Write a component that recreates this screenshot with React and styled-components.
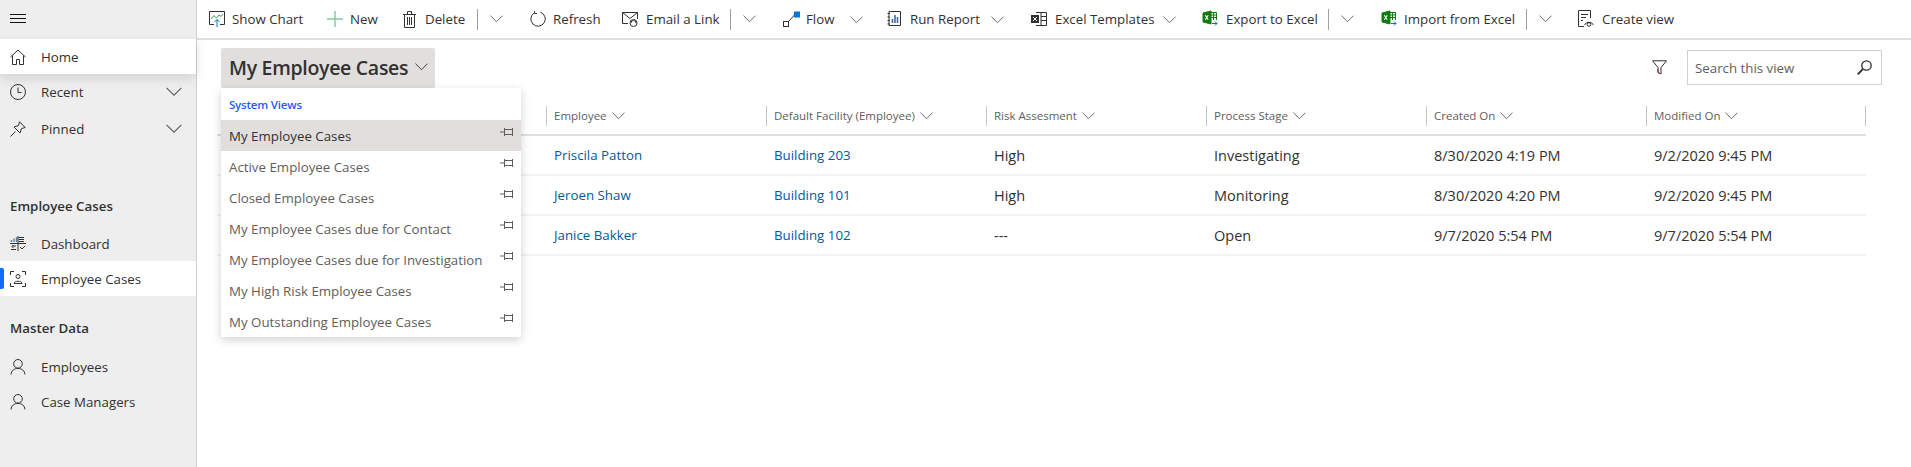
import React from 'react';
import styled, { createGlobalStyle } from 'styled-components';

const GlobalStyle = createGlobalStyle`
    html, body {
        margin: 0;
        padding: 0;
        background: #fff;
        font-family: "Open Sans", "Noto Sans", sans-serif;
        color: #323130;
    }
`;

const Svg = ({ size = 16, w, h, children }) => (
    <svg width={w || size} height={h || size} viewBox={`0 0 ${w || size} ${h || size}`} fill="none" stroke="#323130" strokeWidth="1">
        {children}
    </svg>
);

const Chevron = ({ size = 14, color = '#605e5c' }) => (
    <svg width={size} height={size * 0.6} viewBox="0 0 14 8" fill="none" stroke={color} strokeWidth="1">
        <path d="M0.5 0.5 L7 7 L13.5 0.5" />
    </svg>
);

const ChartIcon = () => (
    <Svg>
        <path d="M5 13.5 H0.5 V0.5 H15.5 V13.5 H11" />
        <path d="M2 8 L5 4.5 L7.5 7 L10 4 L12 5.5 L14 3" stroke="#33a853" />
        <path d="M8 16 V8.5 M5.5 11 L8 8.5 L10.5 11" stroke="#106ebe" />
    </Svg>
);
const PlusIcon = () => (
    <Svg>
        <path d="M8 0 V16 M0 8 H16" stroke="#7fcb9f" strokeWidth="1.4" />
    </Svg>
);
const TrashIcon = () => (
    <Svg w={13} h={17}>
        <path d="M0 3.5 H13 M4.5 3 V0.5 H8.5 V3 M1.5 3.5 V16.5 H11.5 V3.5 M4.5 6 V14 M6.5 6 V14 M8.5 6 V14" />
    </Svg>
);
const RefreshIcon = () => (
    <Svg>
        <path d="M10.5 1.2 A7.2 7.2 0 1 1 4.2 1.9" />
        <path d="M4.5 0 V2.5 H7" />
    </Svg>
);
const MailIcon = () => (
    <Svg>
        <path d="M6 12.5 H0.5 V1.5 H15.5 V8 M0.5 1.5 L8 7.5 L15.5 1.5" />
        <circle cx="11.5" cy="12" r="3.5" />
        <path d="M9 12 A2.5 2.5 0 0 1 14 12" />
    </Svg>
);
const FlowIcon = () => (
    <Svg w={17} h={16}>
        <rect x="0.5" y="10.5" width="5" height="5" />
        <path d="M5.5 10.5 L11.5 4" />
        <rect x="11.5" y="1" width="5" height="5" fill="#0078d4" stroke="#0078d4" />
    </Svg>
);
const ReportIcon = () => (
    <Svg w={14} h={16}>
        <path d="M2 0.5 H13.5 V14.5 H2 V0.5 M0.5 2.5 H3 M0.5 6 H3 M0.5 9.5 H3 M0.5 13 H3" />
        <path d="M5.5 12 V8 M8 12 V4 M10.5 12 V6" stroke="#3b6ea5" strokeWidth="1.6" />
    </Svg>
);
const TemplateIcon = () => (
    <Svg>
        <path d="M5 1.5 H15.5 V14.5 H5 M10 1.5 V14.5 M10 5.5 H15.5 M10 9.5 H15.5" />
        <rect x="0" y="4" width="8" height="8" fill="#323130" stroke="none" />
        <path d="M2 6 L6 10 M6 6 L2 10" stroke="#fff" />
    </Svg>
);
const ExcelIcon = () => (
    <Svg w={16} h={18}>
        <path d="M1 3 L9 1 V14 L1 12 Z" fill="#107c10" stroke="#107c10" />
        <path d="M3.3 5.2 L6.2 9.8 M6.2 5.2 L3.3 9.8" stroke="#fff" strokeWidth="1.1" />
        <path d="M9 2.5 H14.5 V10 M9 5 H14.5 M9 7.5 H14.5 M11.5 2.5 V10" stroke="#107c10" />
        <path d="M10 13.5 H15 M13 11.5 L15 13.5 L13 15.5" stroke="#106ebe" />
    </Svg>
);
const ViewIcon = () => (
    <Svg w={16} h={18}>
        <path d="M6 16.5 H0.5 V0.5 H12.5 V8 M3 4.5 H10 M3 7.5 H8 M3 10.5 H5" />
        <path d="M6.5 15 A5 5 0 0 1 15.5 15" />
        <circle cx="11" cy="14.5" r="1.8" />
    </Svg>
);
const HomeIcon = () => (
    <Svg>
        <path d="M0.5 8 L8 1 L15.5 8 M2.5 6.5 V15.5 H6.5 V10.5 H9.5 V15.5 H13.5 V6.5" />
    </Svg>
);
const ClockIcon = () => (
    <Svg>
        <circle cx="8" cy="8" r="7.5" />
        <path d="M8 3.5 V8.5 H11.5" />
    </Svg>
);
const PinIcon = () => (
    <Svg>
        <path d="M0.5 15.5 L5.5 10.5 M9.5 0.8 L15.2 6.5 L11.5 7.5 L10 12 L4 6 L8.5 4.5 Z" />
    </Svg>
);
const DashIcon = () => (
    <Svg>
        <path d="M1.5 6 V4 M4 6 V2.5 M6.5 6 V1" stroke="#5b7fa6" strokeWidth="1.4" />
        <path d="M0 7.5 H16 M8.5 1.5 H14 M8.5 3.5 H14 M8.5 5.5 H14 M8 0 V15" />
        <path d="M6 10 H2 M3.5 9 L2 10.5 L3.5 12 M1 13.5 H6" />
        <path d="M10 11 L12 13 L15 10" />
    </Svg>
);
const CaseIcon = () => (
    <Svg>
        <path d="M0.5 4 V0.5 H4 M12 0.5 H15.5 V4 M15.5 12 V15.5 H12 M4 15.5 H0.5 V12" />
        <circle cx="8" cy="5.5" r="2" />
        <path d="M4 12.5 C4 9.5 12 9.5 12 12.5 Z" />
    </Svg>
);
const PersonIcon = () => (
    <Svg>
        <circle cx="8" cy="4.8" r="4.3" />
        <path d="M1 15.5 C1.5 11.5 4 9.5 8 9.5 C12 9.5 14.5 11.5 15 15.5" />
    </Svg>
);
const FilterIcon = () => (
    <Svg w={15} h={15}>
        <path d="M0.5 0.8 H14.5 L9 7.5 V14 L6 12.5 V7.5 Z" />
        <path d="M6 9 V12.5 L7.5 13.2" stroke="#a4262c" />
    </Svg>
);
const SearchIcon = () => (
    <Svg w={15} h={15}>
        <circle cx="9.5" cy="5.5" r="4.7" strokeWidth="1.3" />
        <path d="M6 9 L0.7 14.3" strokeWidth="1.8" />
    </Svg>
);
const PinSmall = () => (
    <svg width="14" height="8" viewBox="0 0 14 8" fill="none" stroke="#605e5c" strokeWidth="1">
        <path d="M0 4 H4.5 M4.5 0 V8 M4.5 1.5 H12.5 M4.5 6.5 H12.5 M12.5 0 V8" />
    </svg>
);

const commands = [
    { icon: <ChartIcon />, label: 'Show Chart', w: 118 },
    { icon: <PlusIcon />, label: 'New', w: 76 },
    { icon: <TrashIcon />, label: 'Delete', iconGap: 9, w: 74 },
    { sep: true, w: 53 },
    { icon: <RefreshIcon />, label: 'Refresh', w: 92 },
    { icon: <MailIcon />, label: 'Email a Link', iconGap: 8, w: 108 },
    { sep: true, w: 53 },
    { icon: <FlowIcon />, label: 'Flow', iconGap: 6, w: 104, chevron: 857 - 783 },
    { icon: <ReportIcon />, label: 'Run Report', iconGap: 9, w: 144, chevron: 998 - 887 },
    { icon: <TemplateIcon />, label: 'Excel Templates', iconGap: 8, w: 171, chevron: 1170 - 1031 },
    { icon: <ExcelIcon />, label: 'Export to Excel', iconGap: 8, w: 126 },
    { sep: true, w: 53 },
    { icon: <ExcelIcon />, label: 'Import from Excel', iconGap: 7, w: 145 },
    { sep: true, w: 52 },
    { icon: <ViewIcon />, label: 'Create view', iconGap: 8, w: 110 },
];

const columns = ['Employee', 'Default Facility (Employee)', 'Risk Assesment', 'Process Stage', 'Created On', 'Modified On'];

const rows = [
    ['Priscila Patton', 'Building 203', 'High', 'Investigating', '8/30/2020 4:19 PM', '9/2/2020 9:45 PM'],
    ['Jeroen Shaw', 'Building 101', 'High', 'Monitoring', '8/30/2020 4:20 PM', '9/2/2020 9:45 PM'],
    ['Janice Bakker', 'Building 102', '---', 'Open', '9/7/2020 5:54 PM', '9/7/2020 5:54 PM'],
];

const views = [
    'My Employee Cases',
    'Active Employee Cases',
    'Closed Employee Cases',
    'My Employee Cases due for Contact',
    'My Employee Cases due for Investigation',
    'My High Risk Employee Cases',
    'My Outstanding Employee Cases',
];

const App = () => (
    <>
        <GlobalStyle />
        <Page>
            <Sidebar>
                <Burger>
                    <svg width="16" height="9" viewBox="0 0 16 9" stroke="#111" strokeWidth="1">
                        <path d="M0 0.5 H16 M0 4.5 H16 M0 8.5 H16" />
                    </svg>
                </Burger>
                <NavRow $h={35} $active $shadow><HomeIcon /><NavLabel>Home</NavLabel></NavRow>
                <NavRow $h={36}><ClockIcon /><NavLabel>Recent</NavLabel><NavChevron><Chevron size={16} /></NavChevron></NavRow>
                <NavRow $h={38}><PinIcon /><NavLabel>Pinned</NavLabel><NavChevron><Chevron size={16} /></NavChevron></NavRow>
                <GroupTitle $top={41} $bottom={2}>Employee Cases</GroupTitle>
                <NavRow $h={35}><DashIcon /><NavLabel>Dashboard</NavLabel></NavRow>
                <NavRow $h={35} $active $marker><CaseIcon /><NavLabel>Employee Cases</NavLabel></NavRow>
                <GroupTitle $top={15} $bottom={3}>Master Data</GroupTitle>
                <NavRow $h={35}><PersonIcon /><NavLabel>Employees</NavLabel></NavRow>
                <NavRow $h={35}><PersonIcon /><NavLabel>Case Managers</NavLabel></NavRow>
            </Sidebar>
            <Main>
                <Toolbar>
                    {commands.map((item, i) =>
                        item.sep ? (
                            <SplitChevron key={i} $w={item.w}>
                                <Divider />
                                <Chevron size={13} />
                            </SplitChevron>
                        ) : (
                            <Command key={i} $w={item.w} $gap={item.iconGap || 7}>
                                {item.icon}
                                <span>{item.label}</span>
                                {item.chevron && <CommandChevron $left={item.chevron}><Chevron size={13} /></CommandChevron>}
                            </Command>
                        )
                    )}
                </Toolbar>
                <Content>
                    <ViewBar>
                        <ViewTitle>
                            My Employee Cases
                            <Chevron size={13} color="#323130" />
                        </ViewTitle>
                        <ViewTools>
                            <FilterIcon />
                            <SearchBox>
                                <span>Search this view</span>
                                <SearchIcon />
                            </SearchBox>
                        </ViewTools>
                        <Menu>
                            <MenuHeading>System Views</MenuHeading>
                            {views.map((view, i) => (
                                <MenuItem key={view} $selected={i === 0}>
                                    {view}
                                    <PinHolder><PinSmall /></PinHolder>
                                </MenuItem>
                            ))}
                        </Menu>
                    </ViewBar>
                    <Grid>
                        <HeaderRow>
                            <LeadCell />
                            {columns.map(col => (
                                <HeaderCell key={col}>
                                    <span>{col}</span>
                                    <Chevron size={13} />
                                </HeaderCell>
                            ))}
                            <EndCap />
                        </HeaderRow>
                        {rows.map(row => (
                            <DataRow key={row[0]}>
                                <LeadCell />
                                {row.map((value, i) => (
                                    <DataCell key={i} $link={i < 2}>{value}</DataCell>
                                ))}
                            </DataRow>
                        ))}
                    </Grid>
                </Content>
            </Main>
        </Page>
    </>
);

const Page = styled.div`
    display: flex;
    height: 467px;
    overflow: hidden;
`;
const Sidebar = styled.div`
    width: 196px;
    flex: none;
    background: #eeeeee;
    border-right: 1px solid #d2d0ce;
`;
const Burger = styled.div`
    height: 39px;
    padding: 14px 0 0 10px;
    box-sizing: border-box;
    display: flex;
    align-items: flex-start;
`;
const NavRow = styled.div`
    position: relative;
    height: ${props => props.$h}px;
    display: flex;
    align-items: center;
    padding-left: 10px;
    background: ${props => (props.$active ? '#fff' : 'transparent')};
    box-shadow: ${props => (props.$shadow ? '0 4px 12px rgba(0, 0, 0, 0.12)' : 'none')};
    &::before {
        content: '';
        display: ${props => (props.$marker ? 'block' : 'none')};
        position: absolute;
        left: 0;
        top: 7px;
        width: 4px;
        height: 21px;
        background: #0f6cff;
        border-radius: 0 2px 2px 0;
    }
`;
const NavLabel = styled.span`
    margin-left: 15px;
    font-size: 13.3px;
    color: #323130;
`;
const NavChevron = styled.span`
    margin-left: auto;
    margin-right: 14px;
    display: flex;
`;
const GroupTitle = styled.div`
    margin-top: ${props => props.$top}px;
    margin-bottom: ${props => props.$bottom}px;
    height: 35px;
    line-height: 35px;
    padding-left: 10px;
    font-size: 13.3px;
    font-weight: 600;
    color: #323130;
`;
const Main = styled.div`
    flex: 1;
    min-width: 0;
`;
const Toolbar = styled.div`
    height: 40px;
    box-sizing: border-box;
    display: flex;
    align-items: center;
    padding-left: 12px;
    border-bottom: 2px solid #e1dfdd;
`;
const Command = styled.div`
    position: relative;
    flex: none;
    width: ${props => props.$w}px;
    display: flex;
    align-items: center;
    gap: ${props => props.$gap}px;
    font-size: 13.3px;
    white-space: nowrap;
    color: #323130;
`;
const CommandChevron = styled.span`
    position: absolute;
    left: ${props => props.$left - 7}px;
    top: 6px;
    display: flex;
`;
const SplitChevron = styled.div`
    flex: none;
    width: ${props => props.$w}px;
    display: flex;
    align-items: center;
    gap: 12px;
`;
const Divider = styled.div`
    width: 1px;
    height: 21px;
    background: #a19f9d;
`;
const Content = styled.div`
    padding-left: 20px;
`;
const ViewBar = styled.div`
    position: relative;
    height: 61px;
    display: flex;
    justify-content: space-between;
    padding-top: 8px;
    box-sizing: border-box;
`;
const ViewTitle = styled.div`
    margin-left: 4px;
    width: 214px;
    height: 40px;
    box-sizing: border-box;
    padding: 0 0 2px 8px;
    display: flex;
    align-items: center;
    gap: 7px;
    background: #e1dfdd;
    border-radius: 2px;
    font-size: 19.5px;
    font-weight: 600;
    letter-spacing: -0.3px;
    white-space: nowrap;
    color: #323130;
`;
const ViewTools = styled.div`
    display: flex;
    gap: 20px;
    align-items: flex-start;
    padding-right: 29px;
    & > svg {
        margin-top: 12px;
    }
`;
const SearchBox = styled.div`
    width: 195px;
    height: 35px;
    box-sizing: border-box;
    margin-top: 2px;
    border: 1px solid #d2d0ce;
    display: flex;
    align-items: center;
    justify-content: space-between;
    padding: 0 9px 0 7px;
    font-size: 13.3px;
    color: #605e5c;
`;
const Menu = styled.div`
    position: absolute;
    z-index: 2;
    top: 48px;
    left: 4px;
    width: 300px;
    height: 249px;
    box-sizing: border-box;
    padding-top: 9px;
    background: #fff;
    border-radius: 2px;
    box-shadow: 0 3px 10px rgba(0, 0, 0, 0.18);
`;
const MenuHeading = styled.div`
    height: 16px;
    line-height: 16px;
    margin-bottom: 7px;
    padding-left: 8px;
    font-size: 11.5px;
    font-weight: 600;
    letter-spacing: -0.2px;
    color: #1f5cff;
`;
const MenuItem = styled.div`
    position: relative;
    height: 31px;
    line-height: 32px;
    padding-left: 8px;
    font-size: 13.3px;
    white-space: nowrap;
    background: ${props => (props.$selected ? '#e1dfdd' : '#fff')};
    color: ${props => (props.$selected ? '#323130' : '#605e5c')};
`;
const PinHolder = styled.span`
    position: absolute;
    right: 7px;
    top: 8px;
    display: flex;
`;
const Grid = styled.div`
    width: 1649px;
`;
const HeaderRow = styled.div`
    height: 35px;
    display: flex;
    align-items: flex-start;
    padding-top: 5px;
    box-sizing: border-box;
    border-bottom: 2px solid #e1dfdd;
`;
const LeadCell = styled.div`
    width: 329px;
    flex: none;
`;
const HeaderCell = styled.div`
    width: 220px;
    flex: none;
    box-sizing: border-box;
    height: 20px;
    padding: 0 0 2px 7px;
    display: flex;
    align-items: center;
    gap: 5px;
    border-left: 1px solid #c8c6c4;
    font-size: 11.5px;
    white-space: nowrap;
    color: #605e5c;
    & > svg {
        margin-top: 2px;
    }
`;
const EndCap = styled.div`
    width: 1px;
    height: 20px;
    margin-left: -1px;
    background: #c8c6c4;
`;
const DataRow = styled.div`
    height: 40px;
    box-sizing: border-box;
    display: flex;
    align-items: center;
    border-bottom: 2px solid #f3f2f1;
`;
const DataCell = styled.div`
    width: 220px;
    flex: none;
    box-sizing: border-box;
    padding-left: 8px;
    font-size: ${props => (props.$link ? '13.3px' : '14.5px')};
    white-space: nowrap;
    color: ${props => (props.$link ? '#005a9e' : '#323130')};
`;

export default App;
